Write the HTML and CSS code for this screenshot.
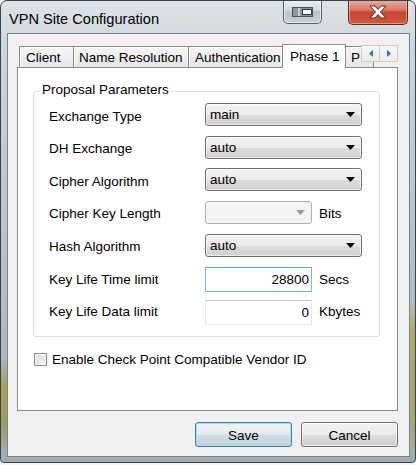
FILE: index.html
```html
<!DOCTYPE html>
<html>
<head>
<meta charset="utf-8">
<link rel="stylesheet" href="styles.css">
</head>
<body>
<div class="window">
  <div class="titlebar">
    <span class="title">VPN Site Configuration</span>
    <div class="cap cap-tray">
      <svg width="22" height="10" viewBox="0 0 22 10"><rect x="0.5" y="0.5" width="20" height="9" fill="#8d959c" stroke="#4b535a"/><rect x="6" y="1" width="2" height="8" fill="#c9ced2"/><rect x="10.5" y="2.5" width="9" height="5" fill="#ffffff" stroke="#333a40"/></svg>
    </div>
    <div class="cap cap-close">
      <svg width="20" height="14" viewBox="0 0 20 14"><path d="M2 1 H7 L10 4.5 L13 1 H18 L12.5 7 L18 13 H13 L10 9.5 L7 13 H2 L7.5 7 Z" fill="#ffffff" stroke="#5a2a22" stroke-width="1" stroke-linejoin="round"/></svg>
    </div>
  </div>
  <div class="client">
    <div class="tabstrip">
      <div class="tab t-client">Client</div>
      <div class="tab t-name">Name Resolution</div>
      <div class="tab t-auth">Authentication</div>
      <div class="tab active t-ph1">Phase 1</div>
      <div class="tab t-ph2">P</div>
      <div class="tab-scroll">
        <span class="sb"><svg width="4" height="7" viewBox="0 0 4 7"><polygon points="4,0 4,7 0,3.5" fill="#3d6cb0"/></svg></span>
        <span class="sb"><svg width="4" height="7" viewBox="0 0 4 7"><polygon points="0,0 0,7 4,3.5" fill="#3d6cb0"/></svg></span>
      </div>
    </div>
    <div class="panel">
      <div class="group">
        <span class="legend">Proposal Parameters</span>
        <div class="grid">
          <span class="lbl">Exchange Type</span>
          <div class="combo wide"><span>main</span><svg width="9" height="5" viewBox="0 0 9 5"><polygon points="0,0 9,0 4.5,5" fill="#000"/></svg></div>

          <span class="lbl">DH Exchange</span>
          <div class="combo wide"><span>auto</span><svg width="9" height="5" viewBox="0 0 9 5"><polygon points="0,0 9,0 4.5,5" fill="#000"/></svg></div>

          <span class="lbl">Cipher Algorithm</span>
          <div class="combo wide"><span>auto</span><svg width="9" height="5" viewBox="0 0 9 5"><polygon points="0,0 9,0 4.5,5" fill="#000"/></svg></div>

          <span class="lbl">Cipher Key Length</span>
          <div class="combo disabled"><span></span><svg width="9" height="5" viewBox="0 0 9 5"><polygon points="0,0 9,0 4.5,5" fill="#9a9a9a"/></svg></div>
          <span class="unit">Bits</span>

          <span class="lbl">Hash Algorithm</span>
          <div class="combo wide"><span>auto</span><svg width="9" height="5" viewBox="0 0 9 5"><polygon points="0,0 9,0 4.5,5" fill="#000"/></svg></div>

          <span class="lbl">Key Life Time limit</span>
          <div class="textbox focus">28800</div>
          <span class="unit">Secs</span>

          <span class="lbl">Key Life Data limit</span>
          <div class="textbox">0</div>
          <span class="unit">Kbytes</span>
        </div>
      </div>
      <div class="check"><span class="box"></span><span>Enable Check Point Compatible Vendor ID</span></div>
    </div>
    <div class="footer">
      <div class="btn default">Save</div>
      <div class="btn">Cancel</div>
    </div>
  </div>
</div>
</body>
</html>
```

FILE: styles.css
```css
* { box-sizing: border-box; }
html, body { margin: 0; padding: 0; }
body {
  background: #f4f4f4;
  font-family: "Liberation Sans", Arial, sans-serif;
  font-size: 13.5px;
  color: #000;
}
.window {
  width: 416px;
  height: 463px;
  border: 1px solid #3c434a;
  border-radius: 7px 7px 4px 4px;
  background:
    linear-gradient(to bottom, rgba(160,158,60,0) 360px, rgba(160,158,60,0.75) 385px, rgba(150,150,60,0.7) 425px, rgba(160,158,60,0) 450px) left top / 6px 100% no-repeat,
    linear-gradient(to bottom, rgba(170,165,70,0) 300px, rgba(170,165,70,0.65) 330px, rgba(170,165,70,0.6) 420px, rgba(170,165,70,0) 455px) right top / 6px 100% no-repeat,
    linear-gradient(to bottom, #dde2e6 0px, #cdd3d8 60px, #b4bbc1 300px, #a3aab0 100%);
  display: flex;
  flex-direction: column;
  overflow: hidden;
}
.titlebar {
  height: 32px;
  display: flex;
  align-items: flex-start;
}
.title {
  font-size: 14.6px;
  margin: 10px 0 0 8px;
  line-height: 17px;
  color: #000;
}
.cap {
  margin-top: -1px;
  display: flex;
  align-items: center;
  justify-content: center;
  border: 1px solid #596168;
  border-top: none;
  border-radius: 0 0 5px 5px;
}
.cap-tray {
  margin-left: auto;
  width: 39px;
  height: 24px;
  background: linear-gradient(#eef1f3 0%, #d3d9de 45%, #bcc4ca 50%, #c8cfd4 100%);
  box-shadow: inset 0 0 0 1px rgba(255,255,255,0.6);
}
.cap-close {
  margin-left: 26px;
  margin-right: 7px;
  width: 60px;
  height: 25px;
  border-color: #5e2a20;
  background: linear-gradient(#eab0a4 0%, #dc7a66 40%, #c8452e 52%, #d2573f 100%);
  box-shadow: inset 0 0 0 1px rgba(255,210,200,0.5);
}
.client {
  margin: 0 5px 0 6px;
  height: 424px;
  background: #f0f0f0;
  border: 1px solid #79818a;
  display: flex;
  flex-direction: column;
}
.tabstrip {
  position: relative;
  z-index: 1;
  margin: 10px 0 -1px 11px;
  width: 379px;
  height: 24px;
  display: flex;
  align-items: flex-end;
  overflow: hidden;
}
.tab {
  flex: none;
  height: 22px;
  border: 1px solid #898c95;
  margin-right: -1px;
  padding: 1px 0 0 6px;
  display: flex;
  align-items: center;
  white-space: nowrap;
  background: linear-gradient(#f5f5f5, #e6e6e6);
  box-shadow: inset 1px 1px 0 #ffffff;
}
.t-client { width: 55px; }
.t-name { width: 116px; padding-left: 5px; }
.t-auth { width: 96px; }
.t-ph1 { width: 64px; }
.t-ph2 { width: 30px; }
.tab.active {
  position: relative;
  z-index: 2;
  height: 24px;
  margin-left: -1px;
  margin-right: -2px;
  padding: 0 0 1px 7px;
  background: #ffffff;
  border-bottom: none;
  box-shadow: none;
}
.tab-scroll {
  position: absolute;
  right: 0;
  top: 1px;
  display: flex;
  z-index: 3;
}
.sb {
  width: 19px;
  height: 17px;
  margin-left: -1px;
  border: 1px solid #c9ccd0;
  background: linear-gradient(#f8f8f8, #ececec);
  display: flex;
  align-items: center;
  justify-content: center;
}
.panel {
  margin-left: 9px;
  width: 381px;
  height: 344px;
  background: #ffffff;
  border: 1px solid #898c95;
  display: flex;
  flex-direction: column;
}
.group {
  position: relative;
  margin: 23px 0 0 15px;
  width: 347px;
  height: 246px;
  border: 1px solid #d5dfe5;
  border-radius: 3px;
  padding: 11px 0 0 15px;
}
.legend {
  position: absolute;
  left: 6px;
  top: -10px;
  line-height: 16px;
  padding: 0 2px;
  background: #ffffff;
}
.grid {
  display: grid;
  grid-template-columns: 156px 107px 50px;
  grid-auto-rows: 23px;
  row-gap: 9.67px;
  align-items: center;
}
.lbl { grid-column: 1; padding-top: 3px; }
.unit { grid-column: 3; padding-left: 7px; padding-top: 3px; }
.combo {
  height: 23px;
  border: 1px solid #707070;
  border-radius: 3px;
  background: linear-gradient(#f2f2f2 0%, #ebebeb 50%, #dddddd 51%, #cfcfcf 100%);
  display: flex;
  align-items: center;
  justify-content: space-between;
  padding: 0 6px 0 4px;
  box-shadow: inset 0 0 0 1px rgba(255,255,255,0.55);
}
.combo.wide { grid-column: 2 / span 2; }
.combo.disabled {
  grid-column: 2;
  background: #f4f4f4;
  border-color: #adb2b5;
  box-shadow: none;
}
.textbox {
  grid-column: 2;
  height: 25px;
  align-self: start;
  margin-top: 1px;
  border: 1px solid #e3e6ea;
  border-top-color: #c5c9ce;
  background: #ffffff;
  text-align: right;
  padding: 4px 2px 0 0;
}
.textbox.focus {
  border-color: #7eb4ea;
  border-top-color: #569de5;
}
.check {
  display: flex;
  align-items: center;
  margin: 16px 0 0 16px;
  height: 13px;
}
.box {
  width: 13px;
  height: 13px;
  border: 1px solid #8e8f8f;
  background: linear-gradient(135deg, #d9dadb, #f7f7f7);
  box-shadow: inset 0 0 0 1px #f4f4f4;
  margin-right: 5px;
}
.footer {
  display: flex;
  justify-content: flex-end;
  gap: 9px;
  margin: 11px 11px 0 0;
}
.btn {
  width: 97px;
  height: 25px;
  border: 1px solid #707070;
  border-radius: 3px;
  background: linear-gradient(#f2f2f2 0%, #ebebeb 50%, #dddddd 51%, #cfcfcf 100%);
  box-shadow: inset 0 0 0 1px rgba(255,255,255,0.6);
  display: flex;
  align-items: center;
  justify-content: center;
  padding-top: 1px;
}
.btn.default {
  border-color: #3c7fb1;
  background: linear-gradient(#eef3f6 0%, #e3ebf0 50%, #d2dce3 51%, #c6d3dc 100%);
  box-shadow: inset 0 0 0 1px #a6dcf6;
}
```
